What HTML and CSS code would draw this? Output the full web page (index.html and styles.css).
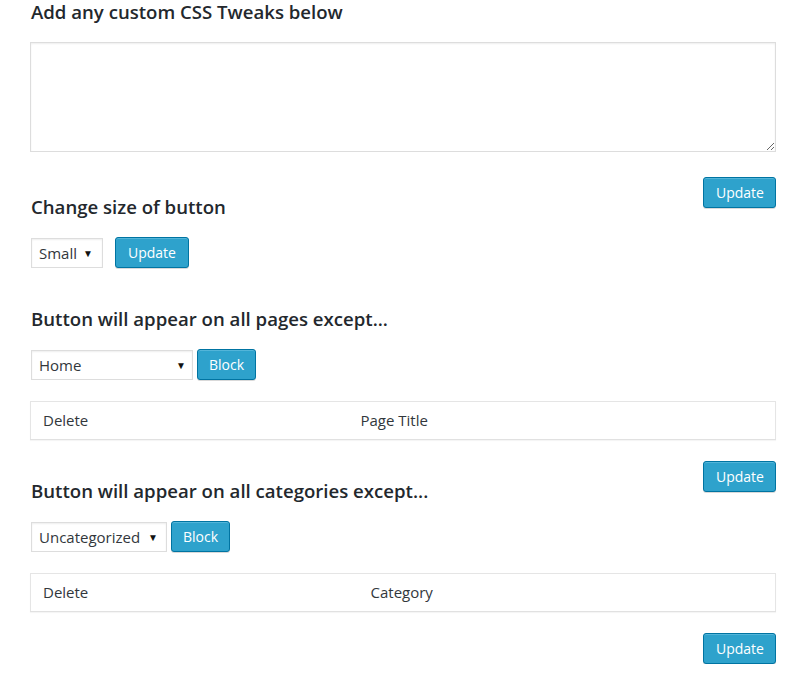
FILE: index.html
```html
<!DOCTYPE html>
<html>
<head>
<meta charset="utf-8">
<link rel="stylesheet" href="styles.css">
</head>
<body>
<div class="wrap">
  <h2 class="title first">Add any custom CSS Tweaks below</h2>
  <textarea class="css-box"></textarea>
  <button class="btn btn-float">Update</button>

  <h2 class="title">Change size of button</h2>
  <div class="row gap-12">
    <div class="select w-small"><span class="val">Small</span><span class="arrow">▼</span></div>
    <button class="btn">Update</button>
  </div>

  <h2 class="title after-row">Button will appear on all pages except...</h2>
  <div class="row gap-4">
    <div class="select w-home"><span class="val">Home</span><span class="arrow">▼</span></div>
    <button class="btn btn-block">Block</button>
  </div>
  <table class="list">
    <thead><tr><th class="c-pages">Delete</th><th>Page Title</th></tr></thead>
  </table>
  <button class="btn btn-float">Update</button>

  <h2 class="title after-table">Button will appear on all categories except...</h2>
  <div class="row gap-4">
    <div class="select w-cat"><span class="val">Uncategorized</span><span class="arrow">▼</span></div>
    <button class="btn btn-block">Block</button>
  </div>
  <table class="list">
    <thead><tr><th class="c-cats">Delete</th><th>Category</th></tr></thead>
  </table>
  <button class="btn btn-float">Update</button>
</div>
</body>
</html>
```

FILE: styles.css
```css
* { box-sizing: border-box; }
html, body { margin: 0; padding: 0; background: #fff; }
body {
  font-family: "Open Sans", "Liberation Sans", sans-serif;
  color: #32373c;
  font-size: 14px;
}
.wrap {
  padding: 1px 32px 0 30px;
  overflow: hidden;
}
.title {
  font-size: 18.6px;
  line-height: 24px;
  font-weight: 600;
  color: #23282d;
  margin: 43px 0 18px 1px;
}
.title.first { margin-top: -1px; }
.title.after-row { margin-top: 39px; }
.title.after-table { margin-top: 39px; }
.css-box {
  display: block;
  width: 746px;
  height: 110px;
  margin: 0;
  border: 1px solid #ddd;
  box-shadow: inset 0 1px 2px rgba(0,0,0,.07);
  resize: vertical;
  background: #fff;
}
.btn {
  font-family: "Open Sans", "Liberation Sans", sans-serif;
  font-size: 14px;
  line-height: 29px;
  height: 31px;
  padding: 0 12px;
  color: #fff;
  background: #2ea2cc;
  border: 1px solid #0074a2;
  border-radius: 3px;
  box-shadow: inset 0 1px 0 rgba(120,200,230,.5), 0 1px 0 rgba(0,0,0,.15);
  cursor: pointer;
}
.btn-block { padding: 0 11px; }
.btn-float {
  float: right;
  clear: right;
  width: 73px;
  margin-top: 25px;
}
table.list + .btn-float { margin-top: 21px; }
.row {
  display: flex;
  align-items: flex-end;
  margin-left: 1px;
}
.gap-12 { gap: 12px; }
.gap-4 { gap: 4px; }
.select {
  height: 30px;
  border: 1px solid #ddd;
  box-shadow: inset 0 1px 2px rgba(0,0,0,.07);
  display: flex;
  align-items: center;
  justify-content: space-between;
  padding: 0 9px 0 7px;
  background: #fff;
  font-size: 15px;
}
.select .arrow {
  font-size: 10px;
  color: #111;
}
.w-small { width: 72px; }
.w-home { width: 162px; padding-right: 6px; }
.w-cat { width: 136px; padding-right: 8px; }
table.list {
  width: 746px;
  margin-top: 21px;
  border-collapse: collapse;
  border: 1px solid #e5e5e5;
  box-shadow: 0 1px 1px rgba(0,0,0,.04);
  background: #fff;
}
table.list th {
  text-align: left;
  font-weight: 400;
  font-size: 15px;
  line-height: 20px;
  padding: 8px 12px 9px;
  border-bottom: 1px solid #e1e1e1;
  color: #32373c;
}
table.list th.c-pages { width: 318px; }
table.list th.c-cats { width: 328px; }
```
